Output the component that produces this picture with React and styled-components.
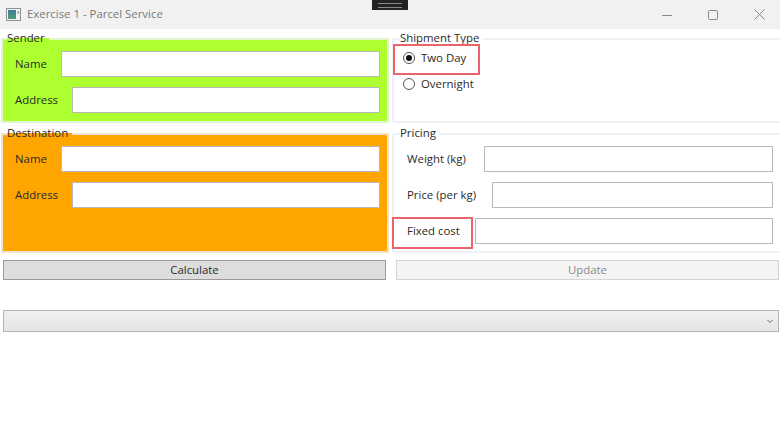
import React from 'react'
import styled, { createGlobalStyle } from 'styled-components'

const Global = createGlobalStyle`
  html, body { margin: 0; padding: 0; background: #fff; }
  * { box-sizing: border-box; }
`

const Page = styled.div`
  position: relative;
  width: 780px;
  height: 438px;
  overflow: hidden;
  background: #fff;
  color: #2a2a2a;
  font-family: "Open Sans", "Noto Sans", sans-serif;
  font-size: 11.4px;
`

const TitleBar = styled.div`
  height: 29px;
  margin-right: -2px;
  background: #f1f1f1;
  display: flex;
  align-items: center;
  padding-left: 6px;
  color: #7a7a7a;
`
const TitleText = styled.span`
  margin-left: 6px;
  padding-bottom: 2px;
  flex: 1;
`
const WindowButton = styled.div`
  width: 46px;
  display: flex;
  justify-content: center;
`
const Grabber = styled.div`
  position: absolute;
  left: 372px;
  top: 0;
  width: 36px;
  height: 10px;
  background: #222;
  display: flex;
  align-items: center;
  justify-content: center;
  &::after {
    content: "";
    width: 24px;
    height: 3px;
    border-top: 1px solid #888;
    border-bottom: 1px solid #888;
  }
`

const Panels = styled.div`
  display: grid;
  grid-template-columns: 388px 396px;
  grid-template-rows: 92px 127px;
  row-gap: 3px;
  padding: 2px 0 0 1px;
  width: 785px;
`
const Group = styled.fieldset`
  margin: 0 0 0 ${p => p.$left || 0}px;
  padding: 4px ${p => p.$padRight}px 0 ${p => p.$padLeft}px;
  min-width: 0;
  border: 2px solid ${p => p.$edge};
  border-radius: 3px;
  background: ${p => p.$bg || 'transparent'};
`
const Legend = styled.legend`
  padding: 0 4px 0 0;
  margin-left: ${p => p.$left}px;
  line-height: 14px;
  height: 16px;
`
const Row = styled.div`
  display: flex;
  align-items: center;
  height: 26px;
  margin-bottom: 10px;
`
const FieldLabel = styled.label`
  flex: 0 0 ${p => p.$w}px;
  padding-bottom: 2px;
  white-space: nowrap;
`
const Input = styled.input`
  flex: 1;
  min-width: 0;
  height: 26px;
  background: #fff;
  border: 1px solid #b9b9b9;
  outline: none;
`
const RadioRow = styled.div`
  display: flex;
  align-items: center;
  height: 16px;
  margin: 0 0 10px -4px;
  &:first-of-type {
    margin-top: -1px;
  }
`
const RadioText = styled.span`
  padding-bottom: 2px;
`
const RadioDot = styled.span`
  width: 12px;
  height: 12px;
  border-radius: 50%;
  border: 1px solid #555;
  margin-right: 6px;
  display: flex;
  align-items: center;
  justify-content: center;
  &::after {
    content: "";
    width: 6px;
    height: 6px;
    border-radius: 50%;
    background: ${p => (p.$on ? '#111' : 'transparent')};
  }
`
const Actions = styled.div`
  display: grid;
  grid-template-columns: 383px 383px;
  column-gap: 10px;
  padding: 0 0 0 3px;
  margin-top: 7px;
`
const Button = styled.button`
  height: 20px;
  padding: 0 0 2px;
  font-family: inherit;
  font-size: 11.4px;
  color: ${p => (p.disabled ? '#8a8a8a' : '#2a2a2a')};
  background: ${p => (p.disabled ? '#f4f4f4' : '#dddddd')};
  border: 1px solid ${p => (p.disabled ? '#d4d4d4' : '#9a9a9a')};
`
const Combo = styled.div`
  margin: 30px 1px 0 3px;
  height: 22px;
  background: linear-gradient(#f0f0f0, #e5e5e5);
  border: 1px solid #b4b4b4;
  display: flex;
  align-items: center;
  justify-content: flex-end;
  padding-right: 4px;
`
const Callout = styled.div`
  position: absolute;
  left: ${p => p.$x}px;
  top: ${p => p.$y}px;
  width: ${p => p.$w}px;
  height: ${p => p.$h}px;
  border: 2px solid #e8636a;
`

const App = () => (
  <Page>
    <Global />
    <TitleBar>
      <svg width="15" height="13" viewBox="0 0 15 13">
        <defs>
          <linearGradient id="appIcon" x1="0" y1="0" x2="0" y2="1">
            <stop offset="0" stopColor="#3f7f9a" />
            <stop offset="1" stopColor="#4f9c7c" />
          </linearGradient>
        </defs>
        <rect x="0.5" y="0.5" width="14" height="12" fill="#f4f4f4" stroke="#8b9195" />
        <rect x="2" y="2" width="8" height="9" fill="url(#appIcon)" />
        <rect x="11.5" y="3" width="1.5" height="3" fill="#9aa0a4" />
      </svg>
      <TitleText>Exercise 1 - Parcel Service</TitleText>
      <WindowButton>
        <svg width="10" height="10" viewBox="0 0 10 10"><path d="M0 5.5h10" stroke="#888" /></svg>
      </WindowButton>
      <WindowButton>
        <svg width="10" height="10" viewBox="0 0 10 10"><rect x="0.5" y="0.5" width="9" height="9" rx="1" fill="none" stroke="#888" /></svg>
      </WindowButton>
      <WindowButton>
        <svg width="11" height="11" viewBox="0 0 11 11"><path d="M0.5 0.5l10 10M10.5 0.5l-10 10" stroke="#888" /></svg>
      </WindowButton>
    </TitleBar>
    <Grabber />
    <Panels>
      <Group $bg="#adff2f" $edge="#e3f5cc" $padLeft={12} $padRight={7}>
        <Legend $left={-8}>Sender</Legend>
        <Row><FieldLabel $w={46}>Name</FieldLabel><Input /></Row>
        <Row><FieldLabel $w={57}>Address</FieldLabel><Input /></Row>
      </Group>
      <Group $left={3} $edge="#edf1f5" $padLeft={13} $padRight={10}>
        <Legend $left={-7}>Shipment Type</Legend>
        <RadioRow><RadioDot $on /><RadioText>Two Day</RadioText></RadioRow>
        <RadioRow><RadioDot /><RadioText>Overnight</RadioText></RadioRow>
      </Group>
      <Group $bg="#ffa500" $edge="#efe3cf" $padLeft={12} $padRight={7}>
        <Legend $left={-8}>Destination</Legend>
        <Row><FieldLabel $w={46}>Name</FieldLabel><Input /></Row>
        <Row><FieldLabel $w={57}>Address</FieldLabel><Input /></Row>
      </Group>
      <Group $left={3} $edge="#edf1f5" $padLeft={13} $padRight={10}>
        <Legend $left={-7}>Pricing</Legend>
        <Row><FieldLabel $w={77}>Weight (kg)</FieldLabel><Input /></Row>
        <Row><FieldLabel $w={85}>Price (per kg)</FieldLabel><Input /></Row>
        <Row><FieldLabel $w={68}>Fixed cost</FieldLabel><Input /></Row>
      </Group>
    </Panels>
    <Actions>
      <Button>Calculate</Button>
      <Button disabled>Update</Button>
    </Actions>
    <Combo>
      <svg width="8" height="6" viewBox="0 0 8 6"><path d="M1.5 2l2.5 2.5 2.5-2.5" fill="none" stroke="#666" /></svg>
    </Combo>
    <Callout $x={393} $y={44} $w={87} $h={31} />
    <Callout $x={392} $y={217} $w={81} $h={32} />
  </Page>
)

export default App
